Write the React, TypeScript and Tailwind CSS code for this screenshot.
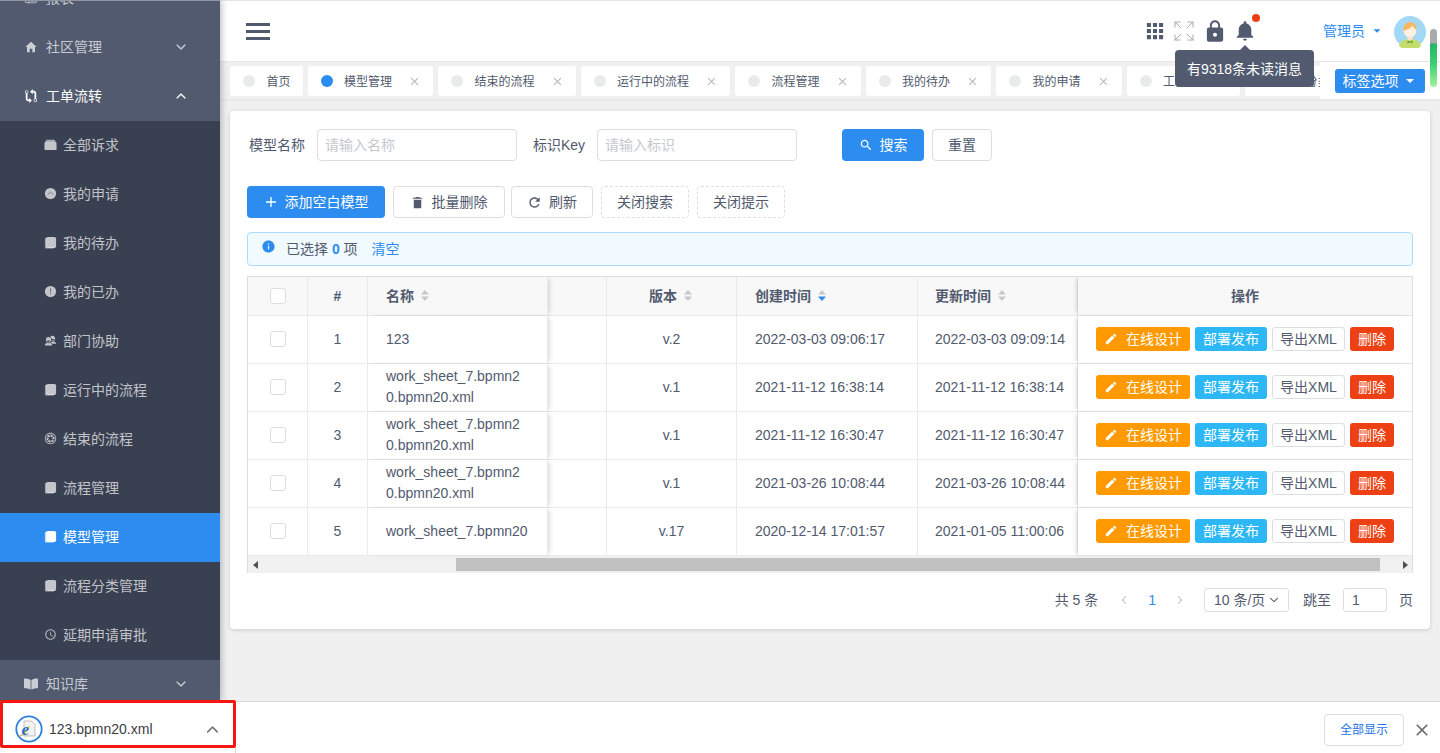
import React from "react";
import {
  IoMdHome, IoMdGitCompare, IoMdAperture, IoMdTime, IoMdApps, IoMdLock, IoMdNotifications, IoMdCreate, IoMdTrash, IoMdRefresh, IoMdSearch,
  IoMdAdd, IoMdInformationCircle, IoMdArrowDropdown, IoIosArrowDown, IoIosArrowUp, IoIosArrowBack, IoIosArrowForward, IoMdClose, IoMdPaper, IoMdContacts,
} from "react-icons/io";
import { FaBookOpen } from "react-icons/fa";
import { Expand } from "lucide-react";

type IconProps = { className?: string };

function CopyIcon({ className }: IconProps) {
  return (
    <svg viewBox="0 0 14 14" className={className}>
      <path d="M1 3.500C1 2.500 1.500 2 2.500 2H3v9c0 .6.400 1 1 1h7v.300c0 .9-.5 1.200-1.400 1.200H2.500C1.500 13.500 1 13 1 12z" fill="currentColor" opacity="0.75" />
      <rect x="2.400" y="1" width="10.600" height="11.800" rx="1.800" fill="currentColor" />
    </svg>
  );
}
function ArchiveIcon({ className }: IconProps) {
  return (
    <svg viewBox="0 0 14 14" className={className}>
      <path d="M2.500 2h9L13 5H1z" fill="currentColor" opacity="0.8" />
      <rect x="0.500" y="4.500" width="13" height="8.500" rx="1" fill="currentColor" />
    </svg>
  );
}
function UpCircleIcon({ className }: IconProps) {
  return (
    <svg viewBox="0 0 14 14" className={className}>
      <circle cx="7" cy="7" r="6" fill="currentColor" />
      <path d="M3.800 8.300L7 5.500l3.200 2.800" fill="none" stroke="#394052" strokeOpacity="0.55" strokeWidth="1" />
    </svg>
  );
}
function AlertIcon({ className }: IconProps) {
  return (
    <svg viewBox="0 0 14 14" className={className}>
      <circle cx="7" cy="7" r="6" fill="currentColor" />
      <rect x="6.400" y="3.500" width="1.200" height="4.500" fill="#394052" fillOpacity="0.6" />
      <rect x="6.400" y="9" width="1.200" height="1.300" fill="#394052" fillOpacity="0.6" />
    </svg>
  );
}

const sub: [string, React.ElementType][] = [
  ["全部诉求", ArchiveIcon], ["我的申请", UpCircleIcon], ["我的待办", CopyIcon], ["我的已办", AlertIcon],
  ["部门协助", IoMdContacts], ["运行中的流程", CopyIcon], ["结束的流程", IoMdAperture], ["流程管理", CopyIcon],
  ["模型管理", CopyIcon], ["流程分类管理", CopyIcon], ["延期申请审批", IoMdTime],
];

function Top({ icon: I, label, open }: { icon: React.ElementType; label: string; open?: boolean }) {
  return (
    <div className={`h-[49px] flex items-center pl-[24px] pr-[32px] pb-[2px] text-sm ${open ? "text-white" : "text-white/70"}`}>
      <I className="w-[14px] h-[14px] mr-[8px] shrink-0" />
      <span className="flex-1">{label}</span>
      {open ? <IoIosArrowUp className="w-[14px] h-[14px]" /> : <IoIosArrowDown className="w-[14px] h-[14px]" />}
    </div>
  );
}

function Sidebar() {
  return (
    <aside className="w-[220px] shrink-0 h-full bg-[#515a6e] border-t border-[#8f95a2] overflow-hidden relative z-20 shadow-[2px_0_6px_rgba(0,21,41,0.25)]">
      <div className="-mt-[27px]">
        <Top icon={IoMdPaper} label="报表" />
        <Top icon={IoMdHome} label="社区管理" />
        <Top icon={IoMdGitCompare} label="工单流转" open />
        <div className="bg-[#394052]">
          {sub.map(([label, I]) => {
            const on = label === "模型管理";
            return (
              <div key={label} className={`h-[49px] flex items-center pl-[44px] pb-[2px] text-sm ${on ? "bg-[#2d8cf0] text-white" : "text-white/70"}`}>
                <I className="w-[13px] h-[13px] mr-[6px] shrink-0" />
                {label}
              </div>
            );
          })}
        </div>
        <Top icon={FaBookOpen} label="知识库" />
      </div>
    </aside>
  );
}

function Avatar() {
  return (
    <svg viewBox="0 0 32 32" className="w-[32px] h-[32px]">
      <circle cx="16" cy="16" r="16" fill="#a3d9f7" />
      <path d="M5 30c1-5 5-7 11-7s10 2 11 7a16 16 0 0 1-22 0z" fill="#c4dc6c" />
      <path d="M13.500 24.500l2.500 1.200 2.500-1.200v3l-2.500-1.200-2.500 1.200z" fill="#5c9a3a" />
      <rect x="13.500" y="19" width="5" height="5" fill="#fde0c4" />
      <circle cx="16" cy="15" r="6.400" fill="#fff0e0" />
      <path d="M9.500 15c-.6-6 3-9 7-9 3.500 0 6.500 3 6 8-2-1-3-3-4-4.500-1.500 2.500-5 4-9 5.500z" fill="#f9b860" />
    </svg>
  );
}

function Header() {
  return (
    <div className="h-[61px] shrink-0 bg-white border-t border-[#e4e4e4] flex items-center pl-[26px] relative">
      <div className="flex flex-col gap-[4px] w-[24px]">
        <div className="h-[3px] bg-[#515a6e]" />
        <div className="h-[3px] bg-[#515a6e]" />
        <div className="h-[3px] bg-[#515a6e]" />
      </div>
      <div className="ml-auto flex items-center text-[#515a6e]">
        <IoMdApps className="w-[26px] h-[26px] mr-[4px]" />
        <Expand className="w-[24px] h-[24px] text-[#a4a9b5] mr-[6px]" strokeWidth={1} />
        <IoMdLock className="w-[26px] h-[26px] mr-[5px]" />
        <div className="relative">
          <IoMdNotifications className="w-[24px] h-[24px]" />
          <span className="absolute -top-[5px] right-[-3px] w-[8px] h-[8px] rounded-full bg-[#ed4014]" />
        </div>
        <span className="ml-[66px] text-[#2d8cf0] text-sm flex items-center">管理员<IoMdArrowDropdown className="w-[14px] h-[14px] ml-[5px]" /></span>
        <div className="ml-[10px] mr-[14px] mt-[1px]"><Avatar /></div>
      </div>
    </div>
  );
}

const tabs = ["首页", "模型管理", "结束的流程", "运行中的流程", "流程管理", "我的待办", "我的申请", "工作表", "流程分类管理"];

function Tabs() {
  return (
    <div className="h-[40px] shrink-0 bg-[#f0f0f0] border-t border-[#e6e6e6] border-b-[2px] border-b-[#e8e8e8] pt-[4px] pl-[10px] flex gap-[5px] overflow-hidden relative">
      {tabs.map((t, i) => (
        <div key={t} className="h-[30px] pt-[2px] shrink-0 bg-white rounded-[3px] flex items-center pl-[13px] text-xs text-[#515a6e]">
          <span className={`w-[12px] h-[12px] rounded-full -mt-[2px] mr-[11.500px] ${i === 1 ? "bg-[#2d8cf0]" : "bg-[#e8eaec]"}`} />
          {t}
          {i === 0 ? <span className="w-[12px]" /> : <IoMdClose className="w-[13px] h-[13px] ml-[16px] mr-[12px] -mt-[2px] text-[#b4b8c1]" />}
        </div>
      ))}
      <div className="absolute right-0 -top-px h-[40px] w-[120px] bg-white flex items-center justify-end pr-[15px]">
        <div className="w-[90px] h-[24px] bg-[#2d8cf0] rounded-[3px] text-white text-sm flex items-center justify-center">
          <span>标签选项</span><IoMdArrowDropdown className="w-[16px] h-[16px] ml-[3px]" />
        </div>
      </div>
    </div>
  );
}

const baseBtn = "h-[32px] rounded-[4px] text-sm flex items-center justify-center shrink-0";

function Search() {
  const input = "w-[200px] h-[32px] shrink-0 border border-[#dcdee2] rounded-[4px] px-[7px] text-sm text-[#c5c8ce] flex items-center";
  return (
    <div className="flex items-center text-sm text-[#515a6e] pl-[2px]">
      <span className="w-[56px] mr-[12px] whitespace-nowrap">模型名称</span>
      <div className={input}>请输入名称</div>
      <span className="ml-[16px] w-[52px] mr-[12px] whitespace-nowrap">标识Key</span>
      <div className={input}>请输入标识</div>
      <div className={`${baseBtn} ml-[45px] w-[82px] bg-[#2d8cf0] text-white`}><IoMdSearch className="w-[14px] h-[14px] mr-[7px]" />搜索</div>
      <div className={`${baseBtn} ml-[8px] w-[60px] border border-[#dcdee2]`}>重置</div>
    </div>
  );
}

function Toolbar() {
  const plain = `${baseBtn} border border-[#dcdee2] text-[#515a6e]`;
  const dash = `${baseBtn} w-[88px] border border-dashed border-[#dcdee2] text-[#515a6e]`;
  return (
    <div className="flex gap-[8px] mt-[25px]">
      <div className={`${baseBtn} w-[138px] pr-[1px] bg-[#2d8cf0] text-white`}><IoMdAdd className="w-[16px] h-[16px] mr-[6px]" />添加空白模型</div>
      <div className={`${plain} w-[112px] pr-[1px]`}><IoMdTrash className="w-[15px] h-[15px] mr-[7px]" />批量删除</div>
      <div className={`${plain} w-[82px] -ml-[2px]`}><IoMdRefresh className="w-[15px] h-[15px] mr-[7px]" />刷新</div>
      <div className={dash}>关闭搜索</div>
      <div className={dash}>关闭提示</div>
    </div>
  );
}

function Alert() {
  return (
    <div className="mt-[14px] h-[34px] bg-[#f0faff] border border-[#abdcff] rounded-[4px] flex items-center pl-[13px] text-sm text-[#515a6e]">
      <IoMdInformationCircle className="w-[15px] h-[15px] text-[#2d8cf0] mr-[10px] -mt-[5px]" />
      已选择&nbsp;<b className="text-[#2d8cf0]">0</b>&nbsp;项
      <span className="ml-[14px] text-[#2d8cf0]">清空</span>
    </div>
  );
}

function Sort({ active }: { active?: boolean }) {
  return (
    <svg viewBox="0 0 8 11" className="w-[8px] h-[11px] ml-[7px] shrink-0 inline-block">
      <path d="M4 0l4 4.500H0z" fill="#c5c8ce" />
      <path d="M4 11L0 6.500h8z" fill={active ? "#2d8cf0" : "#c5c8ce"} />
    </svg>
  );
}

function Check() {
  return <span className="w-[16px] h-[16px] border border-[#dcdee2] rounded-[3px] bg-white block" />;
}

const cols = "grid grid-cols-[60px_60px_180px_59px_130px_181px_160px_1fr]";
const cell = "border-r border-[#e8eaec] flex items-center pb-[1px]";

const rows: [string, string[], string, string, string][] = [
  ["1", ["123"], "v.2", "2022-03-03 09:06:17", "2022-03-03 09:09:14"],
  ["2", ["work_sheet_7.bpmn2", "0.bpmn20.xml"], "v.1", "2021-11-12 16:38:14", "2021-11-12 16:38:14"],
  ["3", ["work_sheet_7.bpmn2", "0.bpmn20.xml"], "v.1", "2021-11-12 16:30:47", "2021-11-12 16:30:47"],
  ["4", ["work_sheet_7.bpmn2", "0.bpmn20.xml"], "v.1", "2021-03-26 10:08:44", "2021-03-26 10:08:44"],
  ["5", ["work_sheet_7.bpmn20"], "v.17", "2020-12-14 17:01:57", "2021-01-05 11:00:06"],
];

const shadowR = "relative z-10 shadow-[3px_0_5px_-2px_rgba(0,0,0,0.18)]";
const shadowL = "relative z-10 shadow-[-3px_0_5px_-2px_rgba(0,0,0,0.18)]";

function Table() {
  const small = "h-[24px] rounded-[3px] text-sm flex items-center justify-center shrink-0";
  return (
    <div className="mt-[10px] border border-b-0 border-[#dcdee2] text-sm text-[#515a6e] overflow-hidden">
      <div className={`${cols} h-[39px] bg-[#f8f8f9] border-b border-[#e8eaec] font-bold`}>
        <div className={`${cell} justify-center`}><Check /></div>
        <div className={`${cell} justify-center`}>#</div>
        <div className={`${cell} pl-[18px] bg-[#f8f8f9] ${shadowR}`}>名称<Sort /></div>
        <div className={cell} />
        <div className={`${cell} justify-center pr-[2px]`}>版本<Sort /></div>
        <div className={`${cell} pl-[18px]`}>创建时间<Sort active /></div>
        <div className={`${cell} pl-[17px]`}>更新时间<Sort /></div>
        <div className={`flex items-center justify-center pb-[1px] bg-[#f8f8f9] ${shadowL}`}>操作</div>
      </div>
      {rows.map((r) => (
        <div key={r[0]} className={`${cols} h-[48px] border-b border-[#e8eaec]`}>
          <div className={`${cell} justify-center`}><Check /></div>
          <div className={`${cell} justify-center`}>{r[0]}</div>
          <div className={`${cell} pl-[18px] leading-[21px] whitespace-nowrap bg-white ${shadowR}`}>
            <div>{r[1].map((l) => <div key={l}>{l}</div>)}</div>
          </div>
          <div className={cell} />
          <div className={`${cell} justify-center`}>{r[2]}</div>
          <div className={`${cell} pl-[18px]`}>{r[3]}</div>
          <div className={`${cell} pl-[17px]`}>{r[4]}</div>
          <div className={`flex items-center pl-[18px] pb-[1px] gap-[5px] bg-white ${shadowL}`}>
            <div className={`${small} w-[94px] bg-[#ff9900] text-white`}><IoMdCreate className="w-[14px] h-[14px] mr-[8px]" />在线设计</div>
            <div className={`${small} w-[72px] bg-[#2db7f5] text-white`}>部署发布</div>
            <div className={`${small} w-[73px] border border-[#dcdee2]`}>导出XML</div>
            <div className={`${small} w-[44px] bg-[#ed4014] text-white`}>删除</div>
          </div>
        </div>
      ))}
      <div className="h-[17px] bg-[#f1f1f1] flex items-center">
        <svg viewBox="0 0 6 8" className="w-[6px] h-[8px] ml-[5px] shrink-0"><path d="M5 0v8L0 4z" fill="#505050" /></svg>
        <div className="h-[13px] w-[924px] bg-[#c1c1c1] ml-[197px] shrink-0" />
        <svg viewBox="0 0 6 8" className="w-[6px] h-[8px] ml-[22px] shrink-0"><path d="M1 0v8l5-4z" fill="#505050" /></svg>
      </div>
    </div>
  );
}

function Pager() {
  return (
    <div className="mt-[15px] h-[24px] flex items-center justify-end text-sm text-[#515a6e]">
      <span>共 5 条</span>
      <IoIosArrowBack className="ml-[20px] w-[12px] h-[12px] text-[#c5c8ce]" />
      <span className="ml-[18px] text-[#2d8cf0]">1</span>
      <IoIosArrowForward className="ml-[18px] w-[12px] h-[12px] text-[#c5c8ce]" />
      <div className="ml-[18px] w-[85px] h-[24px] border border-[#dcdee2] rounded-[3px] flex items-center pl-[9px] whitespace-nowrap">
        10 条/页<IoIosArrowDown className="w-[12px] h-[12px] ml-[3px]" />
      </div>
      <span className="ml-[14px]">跳至</span>
      <div className="ml-[12px] w-[44px] h-[24px] border border-[#dcdee2] rounded-[3px] flex items-center pl-[8px]">1</div>
      <span className="ml-[12px]">页</span>
    </div>
  );
}

function FileIcon() {
  return (
    <svg viewBox="0 0 28 28" className="w-[28px] h-[28px] shrink-0">
      <circle cx="14" cy="14" r="12.700" fill="#fff" stroke="#2d7fe0" strokeWidth="1.800" />
      <path d="M9 6h7.500L20 9.500V21H9z" fill="#f3f3f3" stroke="#a8a8a8" strokeWidth="0.700" />
      <path d="M4.500 21c3.500-.5 7-4 9.500-10" fill="none" stroke="#eab135" strokeWidth="1.200" />
      <text x="6.500" y="20" fontSize="17" fontWeight="700" fontStyle="italic" fill="#1e6fc8" fontFamily="'Liberation Serif', serif">e</text>
    </svg>
  );
}

function DownloadBar() {
  return (
    <div className="h-[52px] shrink-0 bg-white border-t border-[#d6d6d6] flex items-center relative z-30">
      <div className="w-[236px] h-full flex items-center pl-[15px] pt-[4px] border-r border-[#d6d6d6] -mt-px">
        <FileIcon />
        <span className="ml-[6px] text-sm text-[#3c4043]">123.bpmn20.xml</span>
        <IoIosArrowUp className="ml-auto mr-[14px] w-[17px] h-[17px] text-[#757575]" />
      </div>
      <div className="ml-auto mr-[36px] mt-[4px] w-[80px] h-[32px] border border-[#dadce0] rounded-[4px] flex items-center justify-center text-xs text-[#1a73e8]">全部显示</div>
      <IoMdClose className="absolute right-[8px] top-[18px] w-[20px] h-[20px] text-[#6e6e6e]" />
      <div className="absolute left-0 -top-[2px] w-[236px] h-[48px] border-[3px] border-[#f5160f] rounded-[2px]" />
    </div>
  );
}

export default function App() {
  return (
    <div className="w-[1440px] h-[753px] overflow-hidden flex flex-col bg-white [font-family:'Liberation_Sans','Noto_Sans_CJK_SC',sans-serif]">
      <div className="flex-1 min-h-0 flex">
        <Sidebar />
        <main className="flex-1 min-w-0 flex flex-col bg-[#f0f0f0] relative">
          <Header />
          <Tabs />
          <div className="mt-[10px] mx-[10px] h-[518px] bg-white rounded-[4px] shadow-[0_1px_4px_rgba(0,0,0,0.15)] px-[17px] pt-[18px]">
            <Search />
            <Toolbar />
            <Alert />
            <Table />
            <Pager />
          </div>
          <div className="absolute left-[955px] top-[50px] z-30 w-[139px] h-[37px] bg-[#515a6e] rounded-[4px] text-white text-sm flex items-center justify-center">
            <span className="absolute -top-[5px] left-1/2 -translate-x-1/2 w-0 h-0 border-x-[5px] border-x-transparent border-b-[5px] border-b-[#515a6e]" />
            有9318条未读消息
          </div>
          <div className="absolute right-[3px] top-[29px] w-[7px] h-[58px] rounded-[4px] z-30 bg-[linear-gradient(to_bottom,#aaaaaa_0%,#aaaaaa_24%,#22b566_26%,#3ccf72_60%,#a6f0a0_100%)]" />
        </main>
      </div>
      <DownloadBar />
    </div>
  );
}
